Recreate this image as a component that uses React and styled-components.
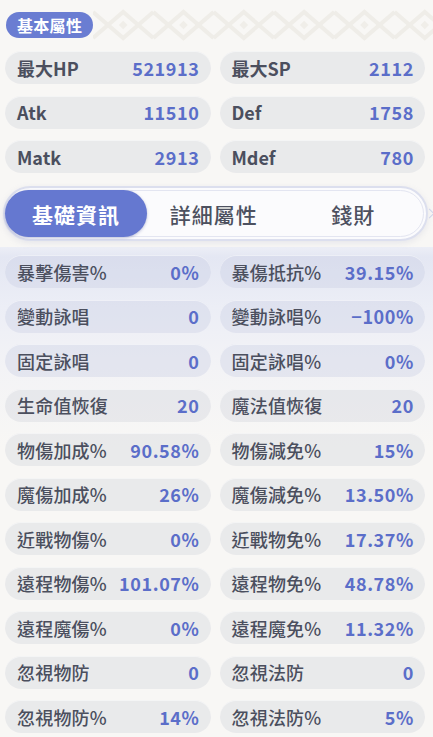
import styled, { createGlobalStyle } from "styled-components";

const GlobalStyle = createGlobalStyle`
  html, body {
    margin: 0;
    padding: 0;
    background: #f8f7f5;
  }
  body {
    font-family: "Noto Sans CJK TC", "Noto Sans", sans-serif;
  }
`;

const Page = styled.div`
  width: 433px;
  height: 737px;
  overflow: hidden;
  background: #f8f7f5;
`;

const TopBar = styled.div`
  display: flex;
  align-items: center;
  padding: 12px 0 0 6px;
  height: 26px;
  svg {
    flex: 1;
    height: 32px;
  }
`;

const Badge = styled.div`
  height: 26px;
  padding: 0 11px;
  border-radius: 13px;
  background: #6a7dd2;
  color: #ffffff;
  font-size: 16px;
  font-weight: 700;
  line-height: 26px;
  letter-spacing: 0.3px;
  flex-shrink: 0;
`;

const Grid = styled.div`
  display: grid;
  grid-template-columns: 1fr 1fr;
  column-gap: 9px;
  row-gap: 11.5px;
  padding: ${(p) => p.$pad};
`;

const Row = styled.div`
  height: 33px;
  border-radius: 17px;
  background: ${(p) => (p.$tint ? "rgba(200, 204, 226, 0.36)" : "rgba(206, 207, 216, 0.34)")};
  box-shadow: inset 0 1px 0 rgba(255, 255, 255, 0.5);
  display: flex;
  align-items: center;
  justify-content: space-between;
  padding: 0 11px 0 12px;
`;

const Label = styled.span`
  font-size: 18px;
  font-weight: ${(p) => (p.$latin ? 700 : 500)};
  color: #4b4f5e;
  letter-spacing: ${(p) => (p.$latin ? "0" : "0.2px")};
`;

const Value = styled.span`
  font-size: 18px;
  font-weight: 700;
  color: #5b6ec9;
  letter-spacing: 0.6px;
`;

const TabWrap = styled.div`
  position: relative;
  margin: 13px 5px 0 3px;
  height: 55px;
  box-sizing: border-box;
  border: 2px solid #dcdfee;
  border-radius: 28px;
  background: #fbfbfd;
  padding: 2px;
  box-shadow: 0 2px 6px rgba(150, 156, 190, 0.18);
  &::after {
    content: "";
    position: absolute;
    right: -7px;
    top: 22px;
    width: 6px;
    height: 6px;
    border-top: 1.5px solid #cfd4ea;
    border-right: 1.5px solid #cfd4ea;
    transform: rotate(45deg);
  }
`;

const TabInner = styled.div`
  height: 100%;
  box-sizing: border-box;
  border: 1.5px solid #e3e5f1;
  border-radius: 25px;
  display: grid;
  grid-template-columns: 136px 1fr 1fr;
  align-items: stretch;
`;

const Tab = styled.div`
  display: flex;
  align-items: center;
  justify-content: center;
  border-radius: 24px;
  margin: -1px -3px;
  font-size: 21px;
  font-weight: ${(p) => (p.$active ? 700 : 500)};
  letter-spacing: 1px;
  color: ${(p) => (p.$active ? "#ffffff" : "#4d5160")};
  background: ${(p) => (p.$active ? "#6578d0" : "transparent")};
  box-shadow: ${(p) => (p.$active ? "0 1px 3px rgba(70, 80, 150, 0.35)" : "none")};
`;

const Lower = styled.div`
  margin-top: 6px;
  padding-top: 8px;
  height: 490px;
  background: linear-gradient(
    180deg,
    #eceef6 0px,
    #e4e7f3 10px,
    #eceef6 60px,
    #f3f3f6 120px,
    #f8f7f5 200px
  );
`;

const Pattern = () => (
  <svg viewBox="0 0 338 32" preserveAspectRatio="none">
    <g fill="none" stroke="#efede8" strokeWidth="4">
      {Array.from({ length: 6 }).map((_, i) => {
        const x = i * 60;
        return (
          <g key={i}>
            <path d={`M${x} 3 L${x + 30} 29 L${x + 60} 3`} />
            <path d={`M${x} 29 L${x + 30} 3 L${x + 60} 29`} />
          </g>
        );
      })}
    </g>
    <g fill="#f0eee9">
      {Array.from({ length: 6 }).map((_, i) => (
        <rect key={i} x={i * 60 + 27} y={13} width="6" height="6" transform={`rotate(45 ${i * 60 + 30} 16)`} />
      ))}
    </g>
  </svg>
);

const baseStats = [
  ["最大HP", "521913", "最大SP", "2112"],
  ["Atk", "11510", "Def", "1758"],
  ["Matk", "2913", "Mdef", "780"],
];

const detailStats = [
  ["暴擊傷害%", "0%", "暴傷抵抗%", "39.15%"],
  ["變動詠唱", "0", "變動詠唱%", "−100%"],
  ["固定詠唱", "0", "固定詠唱%", "0%"],
  ["生命值恢復", "20", "魔法值恢復", "20"],
  ["物傷加成%", "90.58%", "物傷減免%", "15%"],
  ["魔傷加成%", "26%", "魔傷減免%", "13.50%"],
  ["近戰物傷%", "0%", "近戰物免%", "17.37%"],
  ["遠程物傷%", "101.07%", "遠程物免%", "48.78%"],
  ["遠程魔傷%", "0%", "遠程魔免%", "11.32%"],
  ["忽視物防", "0", "忽視法防", "0"],
  ["忽視物防%", "14%", "忽視法防%", "5%"],
];

const isLatin = (s) => /^[A-Za-z]+$/.test(s) || /HP|SP/.test(s);

const StatRows = ({ rows, tint }) =>
  rows.flatMap(([l1, v1, l2, v2], i) => [
    <Row key={`a${i}`} $tint={tint && i < 3}>
      <Label $latin={isLatin(l1)}>{l1}</Label>
      <Value>{v1}</Value>
    </Row>,
    <Row key={`b${i}`} $tint={tint && i < 3}>
      <Label $latin={isLatin(l2)}>{l2}</Label>
      <Value>{v2}</Value>
    </Row>,
  ]);

export default function App() {
  return (
    <Page>
      <GlobalStyle />
      <TopBar>
        <Badge>基本屬性</Badge>
        <Pattern />
      </TopBar>
      <Grid $pad="13px 8px 0 5px">
        <StatRows rows={baseStats} />
      </Grid>
      <TabWrap>
        <TabInner>
          <Tab $active>基礎資訊</Tab>
          <Tab>詳細屬性</Tab>
          <Tab>錢財</Tab>
        </TabInner>
      </TabWrap>
      <Lower>
        <Grid $pad="0 8px 0 5px">
          <StatRows rows={detailStats} tint />
        </Grid>
      </Lower>
    </Page>
  );
}
